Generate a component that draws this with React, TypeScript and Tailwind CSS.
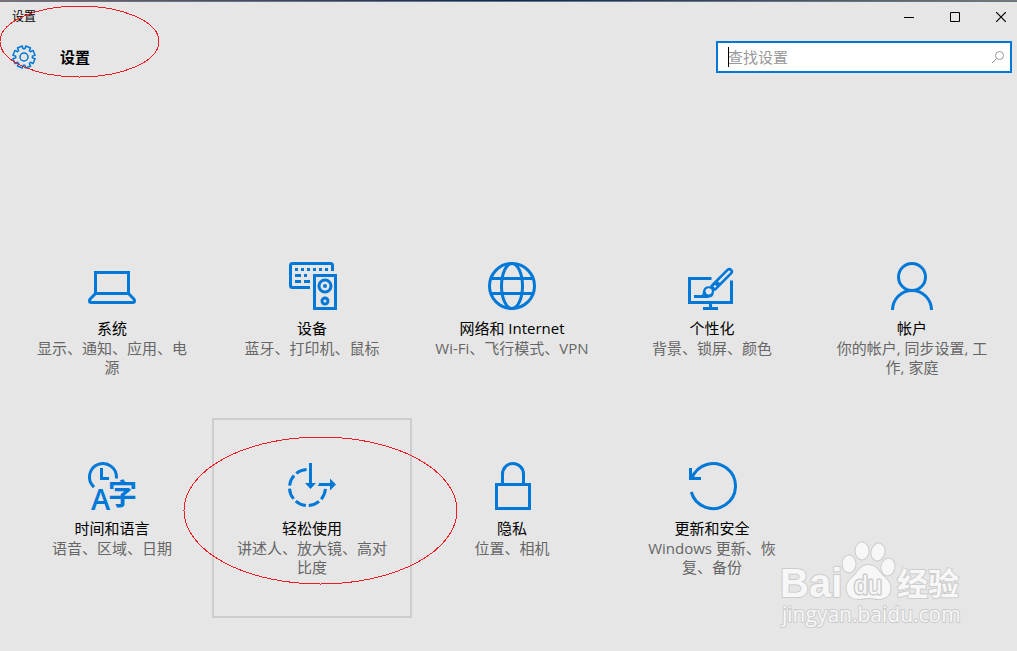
import type { ReactNode } from "react";

type Category = {
  title: string;
  description: string;
  icon: ReactNode;
  selected?: boolean;
};

// eight teeth, notches on the axes
const gearPath =
  Array.from({ length: 8 }, (_, i) => {
    const points = [
      [6, 8.4],
      [9, 11.2],
      [36, 11.2],
      [39, 8.4],
    ];
    return points
      .map(([deg, r], j) => {
        const a = ((i * 45 + deg) * Math.PI) / 180;
        const x = (12 + r * Math.cos(a)).toFixed(2);
        const y = (12 + r * Math.sin(a)).toFixed(2);
        return `${i === 0 && j === 0 ? "M" : "L"}${x} ${y}`;
      })
      .join("");
  }).join("") + "Z";

function Icon({ children }: { children: ReactNode }) {
  return (
    <svg
      viewBox="0 0 48 48"
      className="size-12 overflow-visible"
      fill="none"
      stroke="#0078d7"
      strokeWidth={3}
      aria-hidden="true"
    >
      {children}
    </svg>
  );
}

const categories: Category[] = [
  {
    title: "系统",
    description: "显示、通知、应用、电源",
    icon: (
      <Icon>
        <path d="M7.5 10.5h33v21h-33z" />
        <path d="M7.5 31.5 2.2 37q-.7.8-.7 1.8 0 1.7 1.8 1.7h41.4q1.8 0 1.8-1.7 0-1-.7-1.8l-5.3-5.5" />
      </Icon>
    ),
  },
  {
    title: "设备",
    description: "蓝牙、打印机、鼠标",
    icon: (
      <Icon>
        <path d="M44.5 9V3.5q0-2-2-2h-38q-2 0-2 2v20q0 2 2 2H22" />
        <path d="M7 7.5h34" strokeDasharray="3 3" />
        <path d="M7 13.5h6M16 13.5h3M7 19.5h6M16 19.5h6" />
        <path d="M26.5 13.5h21v33h-21z" />
        <circle cx="37" cy="24" r="6" />
        <circle cx="37" cy="24" r="2" fill="#0078d7" stroke="none" />
        <circle cx="37" cy="39" r="3" />
      </Icon>
    ),
  },
  {
    title: "网络和 Internet",
    description: "Wi-Fi、飞行模式、VPN",
    icon: (
      <Icon>
        <circle cx="24" cy="24" r="22.5" />
        <ellipse cx="24" cy="24" rx="10.5" ry="22.5" />
        <path d="M3 16.5h42M3 31.5h42" />
      </Icon>
    ),
  },
  {
    title: "个性化",
    description: "背景、锁屏、颜色",
    icon: (
      <Icon>
        <path d="M23.5 16.5h-22v24h42V18.5" />
        <path d="M22.5 42v3M15 46.5h15" />
        <path d="M41.3 9.7 26 25" strokeWidth={7.5} strokeLinecap="round" />
        <path d="M41.3 9.7 31.5 19.5" stroke="#e6e6e6" strokeWidth={2.4} strokeLinecap="round" />
        <path d="m26.3 23.7 1.4 1.4" stroke="#e6e6e6" strokeWidth={2.4} />
        <path d="M6 34.5h14" />
        <path d="M15 29q0 4-2 5.5l7 1.2q6 0 6-6.2 0-5-5.2-5.3-5 0-5.8 4.8z" fill="#0078d7" stroke="none" />
        <circle cx="20.7" cy="29.3" r="3.1" fill="#e6e6e6" stroke="none" />
      </Icon>
    ),
  },
  {
    title: "帐户",
    description: "你的帐户, 同步设置, 工作, 家庭",
    icon: (
      <Icon>
        <circle cx="24" cy="15" r="13.5" />
        <path d="M4.5 48a19.5 19.5 0 0 1 39 0" />
      </Icon>
    ),
  },
  {
    title: "时间和语言",
    description: "语音、区域、日期",
    icon: (
      <Icon>
        <path d="M6 25.1A13.5 13.5 0 1 1 28.4 16.5" />
        <path d="M13.5 6v10.5H21" />
        <g fill="#0078d7" stroke="none">
          <text x="3" y="48" fontSize="29" className="font-['Open_Sans',sans-serif] font-semibold">
            A
          </text>
          <text x="20" y="43" fontSize="29" className="font-['Noto_Sans_CJK_SC',sans-serif] font-bold">
            字
          </text>
        </g>
      </Icon>
    ),
  },
  {
    title: "轻松使用",
    description: "讲述人、放大镜、高对比度",
    selected: true,
    icon: (
      <Icon>
        <path
          d="M37.5 25.5A18 18 0 1 1 19.5 7.5"
          strokeDasharray="11.14 3"
          strokeDashoffset={-1.5}
        />
        <path d="M22.5 1v21M31 22.5h12" />
        <path d="M17 21h11l-5.5 6zM42 16.5v12l6-6zM29.5 24l2.5-3v3z" fill="#0078d7" stroke="none" />
      </Icon>
    ),
  },
  {
    title: "隐私",
    description: "位置、相机",
    icon: (
      <Icon>
        <path d="M8.5 22.5h33v24h-33z" />
        <path d="M14.5 22V12a10.5 10.5 0 0 1 21 0v10" />
      </Icon>
    ),
  },
  {
    title: "更新和安全",
    description: "Windows 更新、恢复、备份",
    icon: (
      <Icon>
        <path d="M3.8 16.5A22.5 22.5 0 1 1 3.3 30" />
        <path d="M2.5 6v10.5H13" />
      </Icon>
    ),
  },
];

function CategoryTile({ title, description, icon, selected }: Category) {
  return (
    <button
      type="button"
      className={`relative flex h-[200px] flex-col items-center border-2 px-5 pt-[42px] ${
        selected ? "border-[#cdcdcd]" : "border-transparent"
      }`}
    >
      {icon}
      <span className="mt-2 text-[15px] leading-5 text-black">{title}</span>
      <span className="mt-px text-[15px] leading-[19px] text-[#666666]">{description}</span>
      {selected && (
        <svg
          viewBox="0 0 275 149"
          className="pointer-events-none absolute -left-[31px] top-4 h-[149px] w-[275px]"
          fill="none"
          stroke="#ed1c24"
          shapeRendering="crispEdges"
          aria-hidden="true"
        >
          <ellipse cx="137.5" cy="74.5" rx="136.5" ry="73.5" />
        </svg>
      )}
    </button>
  );
}

function TitleBar() {
  return (
    <div className="flex h-[30px] items-center justify-between pl-3">
      <span className="text-xs text-black">设置</span>
      <div className="flex h-full gap-[14px]">
        <button type="button" aria-label="最小化" className="flex w-8 items-center justify-center">
          <svg viewBox="0 0 10 10" className="size-[10px]" stroke="#000" aria-hidden="true">
            <path d="M0 5.5h10" />
          </svg>
        </button>
        <button type="button" aria-label="最大化" className="flex w-8 items-center justify-center">
          <svg viewBox="0 0 10 10" className="size-[10px]" fill="none" stroke="#000" aria-hidden="true">
            <path d="M.5.5h9v9h-9z" />
          </svg>
        </button>
        <button type="button" aria-label="关闭" className="flex w-8 items-center justify-center">
          <svg viewBox="0 0 10 10" className="size-[10px]" stroke="#000" strokeWidth={1.2} aria-hidden="true">
            <path d="m0 0 10 10M10 0 0 10" />
          </svg>
        </button>
      </div>
    </div>
  );
}

function Header() {
  return (
    <header className="mt-[9px] flex items-center justify-between pl-3 pr-[5px]">
      <div className="flex items-center gap-6">
        <svg
          viewBox="0 0 24 24"
          className="size-6"
          fill="none"
          stroke="#0078d7"
          strokeWidth={1.5}
          strokeLinejoin="round"
          aria-hidden="true"
        >
          <path d={gearPath} />
          <circle cx="12" cy="12" r="4" />
        </svg>
        <h1 className="text-[15px] font-bold text-black">设置</h1>
      </div>
      <div className="relative flex h-8 w-[296px] items-center border-2 border-[#0078d7] bg-white pl-[10px] pr-[6px]">
        <input
          type="text"
          aria-label="查找设置"
          placeholder="查找设置"
          className="h-5 min-w-0 flex-1 bg-transparent text-[15px] outline-none placeholder:text-[#999999]"
        />
        <span className="absolute left-[10px] top-1 h-5 w-px bg-black" />
        <svg viewBox="0 0 12 12" className="size-3" fill="none" stroke="#999999" aria-hidden="true">
          <circle cx="7.5" cy="4.5" r="4" />
          <path d="M4.7 7.3 0 12" />
        </svg>
      </div>
    </header>
  );
}

function Watermark() {
  return (
    <svg
      viewBox="0 0 184 92"
      className="pointer-events-none absolute bottom-[21px] right-[53px] h-[92px] w-[184px]"
      fill="#f7f7f7"
      stroke="#cccccc"
      strokeWidth={2}
      strokeLinejoin="round"
    >
      <g className="[paint-order:stroke]">
        <text x="0" y="59" fontSize="40" className="font-['Liberation_Sans',sans-serif] font-bold">
          Bai
        </text>
        <ellipse cx="69" cy="26" rx="6.5" ry="8.5" />
        <ellipse cx="82" cy="13" rx="6.5" ry="8.5" />
        <ellipse cx="98" cy="14" rx="6.5" ry="8.5" transform="rotate(12 98 14)" />
        <ellipse cx="108" cy="29" rx="6.5" ry="8.5" transform="rotate(10 108 29)" />
        <path d="M88.500 27c-6 0-9 4-12 8-4 5-10 8-10 15 0 8 6 11 12 11 5 0 6-1 10-1s6 1 11 1c6 0 11-4 11-11s-6-10-10-15c-3-4-6-8-12-8z" />
        <text x="74" y="56" fontSize="25" strokeWidth={3} className="font-['Liberation_Sans',sans-serif]">
          du
        </text>
        <text x="117" y="57" fontSize="31" className="font-['Noto_Sans_CJK_SC',sans-serif] font-bold">
          经验
        </text>
        <text x="2" y="84" fontSize="21" className="font-['Open_Sans',sans-serif]">
          jingyan.baidu.com
        </text>
      </g>
    </svg>
  );
}

export default function App() {
  return (
    <div className="relative min-h-screen overflow-hidden bg-[#e6e6e6] font-['Open_Sans','Noto_Sans_CJK_SC',sans-serif]">
      <div className="h-0.5 border-b border-[#3a7fc1] bg-linear-to-r from-[#b5622c] via-[#3c1a12] to-[#a8702f]" />
      <TitleBar />
      <Header />
      <main className="mt-[145px] grid grid-cols-[repeat(auto-fill,200px)] pl-3">
        {categories.map((category) => (
          <CategoryTile key={category.title} {...category} />
        ))}
      </main>
      <svg
        viewBox="0 0 161 73"
        className="pointer-events-none absolute -left-px top-[5px] h-[73px] w-[161px]"
        fill="none"
        stroke="#ed1c24"
        shapeRendering="crispEdges"
        aria-hidden="true"
      >
        <ellipse cx="80.5" cy="36.5" rx="79.5" ry="35.5" />
      </svg>
      <Watermark />
    </div>
  );
}
